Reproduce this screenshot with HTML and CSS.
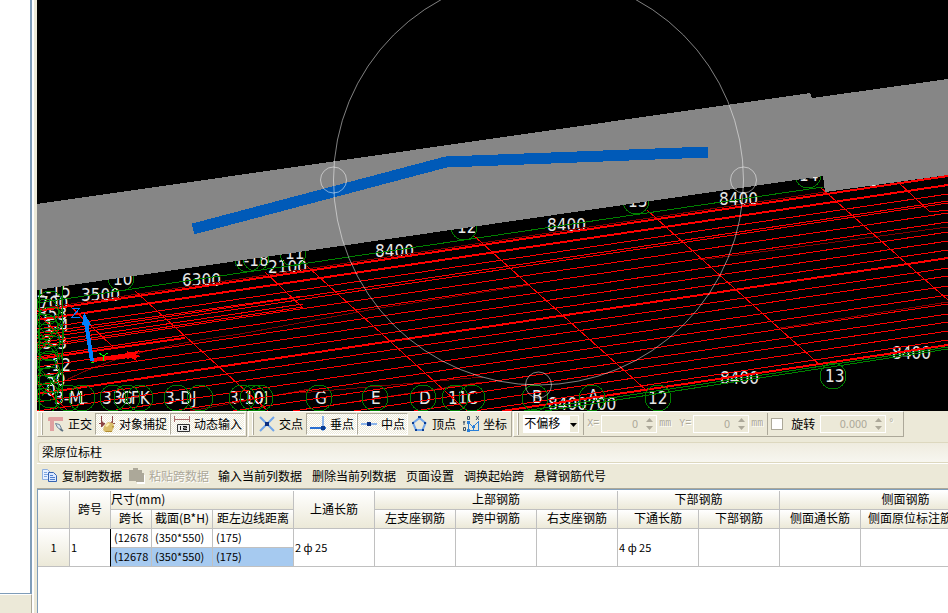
FILE: index.html
```html
<!DOCTYPE html>
<html lang="zh-CN">
<head>
  <meta charset="UTF-8">
  <meta name="viewport" content="width=device-width, initial-scale=1.0">
  <title>梁原位标柱</title>
  <link rel="stylesheet" href="styles.css">
</head>
<body>
  <div class="app">
    <aside class="side">
      <div class="side-list"></div>
      <div class="side-foot"></div>
    </aside>

    <main class="main">
      <svg class="view" viewBox="37 0 911 411" preserveAspectRatio="xMidYMid slice">
        <!-- axis labels -->
        <g class="label">
          <text x="719" y="205">8400</text>
          <text x="547" y="231">8400</text>
          <text x="375" y="257">8400</text>
          <text x="182" y="286">6300</text>
          <text x="81" y="301">3500</text>
          <text x="268" y="273">2100</text>
          <text x="720" y="384">8400</text>
          <text x="892" y="359">8400</text>
          <text x="548" y="410">8400</text>
          <text x="587" y="410">700</text>
          <text x="799" y="181">14</text>
          <text x="628" y="207">13</text>
          <text x="457" y="233">12</text>
          <text x="285" y="259">11</text>
          <text x="234" y="266">1-18</text>
          <text x="113" y="285">10</text>
          <text x="869" y="186">3</text>
          <text x="36" y="297">1-15</text>
          <text x="39" y="309">700</text>
          <text x="38" y="320">353</text>
          <text x="44" y="332">1-4</text>
          <text x="42" y="349">3-3</text>
          <text x="46" y="371">-12</text>
          <text x="46" y="386">50</text>
          <text x="46" y="396">0</text>
          <text x="54" y="404">3-</text>
          <text x="69" y="404">M</text>
          <text x="79" y="404">L</text>
          <text x="102" y="404">3</text>
          <text x="113" y="404">3-</text>
          <text x="121" y="404">G</text>
          <text x="131" y="404">FK</text>
          <text x="165" y="404">3-DJ</text>
          <text x="229" y="404">3-10</text>
          <text x="254" y="404">0I</text>
          <text x="315" y="404">G</text>
          <text x="371" y="404">E</text>
          <text x="419" y="404">D</text>
          <text x="448" y="404">11</text>
          <text x="467" y="404">C</text>
          <text x="532" y="403">B</text>
          <text x="588" y="402">A</text>
          <text x="648" y="404">12</text>
          <text x="825" y="382">13</text>
        </g>

        <!-- grid lines -->
        <path class="dark" d="M63 382Q120 350 240 334L380 308L530 285M700 260L948 227M780 328L948 302M37 309L825 192M300 393L483 377M300 410L483 382M190 411L310 389"/>
        <path class="red" d="M37 329L948 194M37 336L948 201M37 339L948 203M37 348L948 213M37 357L948 222M37 367L948 232M37 376L948 241M37 385L948 250M37 402L948 268M37 411L948 276M109 411L948 286M172 411L948 295M233 411L948 304M293 411L948 314M354 411L948 322M414 411L948 331M474 411L948 340"/>
        <path class="red" d="M37 333L303 296M37 343L303 304M37 346L303 307"/>
        <path class="red thick" d="M37 311L948 176M37 320L948 185M37 394L948 258M502 411L948 345M37 359L185 338"/>
        <path class="red" d="M135 291L268 411M265 272L303 308M67 303L113 347M307 266L467 411M473 235L646 390M647 210L820 365M820 187L948 300M898 182L930 212L948 210M37 381L68 411M37 313L68 343"/>

        <!-- axes and their bubbles -->
        <path class="green" d="M37 303L823 187M524 411L948 347M545 411L948 349"/>
        <g class="green">
          <circle cx="464" cy="227" r="13"/><circle cx="636" cy="201" r="13"/>
          <circle cx="808" cy="175" r="13"/><circle cx="121" cy="278" r="13"/>
          <circle cx="293" cy="253" r="13"/><circle cx="248" cy="259" r="13"/>
          <circle cx="256" cy="258" r="13"/>
          <circle cx="68" cy="398" r="13"/><circle cx="82" cy="398" r="13"/>
          <circle cx="113" cy="398" r="13"/><circle cx="127" cy="398" r="13"/>
          <circle cx="140" cy="398" r="13"/><circle cx="177" cy="398" r="13"/>
          <circle cx="200" cy="398" r="13"/><circle cx="242" cy="398" r="13"/>
          <circle cx="253" cy="398" r="13"/><circle cx="260" cy="398" r="13"/>
          <circle cx="319" cy="398" r="13"/><circle cx="375" cy="398" r="13"/>
          <circle cx="423" cy="398" r="13"/><circle cx="455" cy="398" r="13"/>
          <circle cx="472" cy="398" r="13"/><circle cx="535" cy="398" r="13"/>
          <circle cx="592" cy="398" r="13"/><circle cx="658" cy="398" r="13"/>
          <circle cx="833" cy="376" r="13"/>
          <circle cx="50" cy="304" r="13"/><circle cx="46" cy="312" r="13"/>
          <circle cx="50" cy="320" r="13"/><circle cx="45" cy="327" r="13"/>
          <circle cx="51" cy="334" r="13"/><circle cx="47" cy="341" r="13"/>
          <circle cx="50" cy="348" r="13"/><circle cx="45" cy="356" r="13"/>
          <circle cx="50" cy="364" r="13"/><circle cx="47" cy="372" r="13"/>
          <circle cx="50" cy="380" r="13"/><circle cx="46" cy="388" r="13"/>
          <circle cx="50" cy="395" r="13"/><circle cx="44" cy="401" r="13"/>
          <path d="M39 290V411M62 286V395M38 330L60 360M40 350L62 320M42 396L60 370M38 366L60 392"/>
        </g>

        <!-- slab and selected beam -->
        <path class="slab" d="M37 204L810 93L812 98L948 79V175L825 192L823 176L37 290Z"/>
        <path class="beam" d="M193 229L446 162L708 152"/>

        <!-- orbit ring -->
        <g class="orbit">
          <circle cx="538.5" cy="180" r="205"/>
          <circle cx="333.5" cy="180" r="13"/>
          <circle cx="743.5" cy="180" r="13"/>
          <circle cx="538.5" cy="385" r="13"/>
        </g>

        <!-- ucs icon -->
        <path class="axis-x" d="M92 360L130 356"/>
        <path class="axis-x-head" d="M127 351L132 353L139 350L136 355L141 356L136 358L137 361L131 358L127 359Z"/>
        <path class="axis-z" d="M92 361L86 322"/>
        <path class="axis-z-head" d="M84 312L91 325H82Z"/>
        <path class="axis-z-mark" d="M72 308H80L72 317H80"/>
        <path class="axis-y-mark" d="M99 353L103 356L108 353M103 356V361M91 362H94"/>
      </svg>

      <div class="toolbar">
        <div class="band">
          <button class="tool">
            <svg width="16" height="16"><path fill="#dfa0a0" d="M1 1h14v4H6v10H2V5H0V2z"/><path fill="#dce6ef" stroke="#6f8496" d="M7.500 7.500l4 1 2 4-1 1-3-2z"/><path stroke="#5a6f80" stroke-width="2" d="M12 13l3 2"/></svg>正交</button>
          <button class="tool down">
            <svg width="16" height="16"><path fill="none" stroke="#8b4545" d="M2.500 0v11M13.500 0v10M0 7.500h6M11 7.500h5"/><path fill="#8b4545" d="M3 5l3 3-3 3zM13 5l-3 3 3 3z"/><path fill="#d9bd69" d="M5 10l4-4 5 1 1 3-2 6H6l-2-2z"/><path fill="#fff2b5" d="M6 10l3-3 2 1-3 3z"/><path fill="#b18c32" d="M6 15h7v1H7zM13 10h2l-1 3z"/></svg>对象捕捉</button>
          <button class="tool down">
            <svg width="16" height="16"><path fill="none" stroke="#a96a6a" d="M.5 0v6M15.500 0v6M0 3.500h16"/><path fill="#eee" stroke="#333" d="M3.500 8.500h12v7h-12z"/><path fill="none" stroke="#111" d="M6.500 10v4M9 10.500h3.500v1.500H9.500v1.500H13"/></svg>动态输入</button>
        </div>
        <div class="band">
          <button class="tool">
            <svg width="16" height="16"><path fill="none" stroke="#6fa4ea" stroke-width="2" d="M1 1l14 14M15 1L1 15"/><path fill="#0a2f80" d="M6 6h4v4H6z"/></svg>交点</button>
          <button class="tool down">
            <svg width="16" height="16"><path stroke="#8bb4ea" stroke-width="2" d="M13 0v15"/><path stroke="#2a6fd0" stroke-width="2" d="M0 12h16"/><path fill="#0a3c90" d="M11 10h4v4h-4z"/></svg>垂点</button>
          <button class="tool down">
            <svg width="16" height="16"><path stroke="#8bb4ea" stroke-width="2" d="M0 8h16"/><path fill="#0a2f80" d="M6 6h4v4H6z"/></svg>中点</button>
          <button class="tool">
            <svg width="16" height="16"><path fill="none" stroke="#6fa4ea" stroke-width="2" d="M7.500 2l6 5-3 7H4L1 7z"/><path fill="#0a3c90" d="M6 0h3v2H6zM12 6h2v2h-2zM0 6h2v2H0zM3 13h2v2H3zM10 13h2v2h-2z"/></svg>顶点</button>
          <button class="tool">
            <svg width="16" height="16"><path fill="none" stroke="#2a80d8" d="M5.500 5v10M4 14.500h12M5 6l5 5 5-5M15.500 5v9M10.500 9v5"/><path fill="none" stroke="#3f5060" d="M4.500 .5h2v3h-2zM.5 11.500h2v3h-2zM0 5l1 2 1-2M1 7v2M13 0l3 4M16 0l-3 4"/><path fill="#2a80d8" d="M4 5h3v3H4zM9 10h3v2H9zM4 13h3v3H4z"/></svg>坐标</button>
        </div>
        <div class="band">
          <span class="combo">
            <select aria-label="偏移"><option>不偏移</option></select>
            <svg class="combo-arrow" width="7" height="4"><path d="M0 0h7L3.500 4z"/></svg>
          </span>
          <span class="sep"></span>
          <label class="unit" for="offset-x">X=</label>
          <span class="spin"><input id="offset-x" type="text" value="0" disabled><svg width="7" height="12"><path d="M3.500 0L7 4H0zM0 8h7L3.500 12z"/></svg></span>
          <span class="unit after">mm</span>
          <label class="unit" for="offset-y">Y=</label>
          <span class="spin"><input id="offset-y" type="text" value="0" disabled><svg width="7" height="12"><path d="M3.500 0L7 4H0zM0 8h7L3.500 12z"/></svg></span>
          <span class="unit">mm</span>
          <span class="sep"></span>
          <input class="check" id="rotate" type="checkbox">
          <label class="rotate" for="rotate">旋转</label>
          <span class="spin wide"><input type="text" value="0.000" aria-label="旋转角度" disabled><svg width="7" height="12"><path d="M3.500 0L7 4H0zM0 8h7L3.500 12z"/></svg></span>
          <span class="unit after">°</span>
        </div>
      </div>

      <h1 class="caption">梁原位标柱</h1>

      <div class="actions">
        <button class="action">
          <svg width="16" height="16"><path fill="#e8f1ff" stroke="#8fb0e0" d="M.5 1.500h5l3 3v7h-8z"/><path stroke="#7fa6e0" d="M2 4.500h3M2 6.500h4M2 8.500h3"/><path fill="#dbe8ff" stroke="#3563b0" d="M6.500 4.500h5l3 3v6h-8z"/><path stroke="#4f7fcb" d="M8 7.500h3M8 9.500h5M8 11.500h5"/></svg>复制跨数据</button>
        <button class="action" disabled>
          <svg width="16" height="16"><path fill="#fff" d="M8 7h8v9H8z"/><path fill="#aca899" d="M0 2h4V0h5v2h4v3h2v9H7v-1H0z"/></svg>粘贴跨数据</button>
        <button class="action">输入当前列数据</button>
        <button class="action">删除当前列数据</button>
        <button class="action">页面设置</button>
        <button class="action">调换起始跨</button>
        <button class="action">悬臂钢筋代号</button>
      </div>

      <div class="sheet">
        <table class="grid">
          <colgroup>
            <col class="c-index"><col class="c-no"><col class="c-length"><col class="c-section"><col class="c-bar">
            <col class="c-bar"><col class="c-bar"><col class="c-bar"><col class="c-bar"><col class="c-bar"><col class="c-bar">
            <col class="c-bar"><col class="c-side"><col class="c-rest">
          </colgroup>
          <thead>
            <tr>
              <th rowspan="2"></th>
              <th rowspan="2">跨号</th>
              <th class="left" colspan="3">尺寸(mm)</th>
              <th rowspan="2">上通长筋</th>
              <th colspan="3">上部钢筋</th>
              <th colspan="2">下部钢筋</th>
              <th colspan="3">侧面钢筋</th>
            </tr>
            <tr>
              <th>跨长</th>
              <th>截面(B*H)</th>
              <th>距左边线距离</th>
              <th>左支座钢筋</th>
              <th>跨中钢筋</th>
              <th>右支座钢筋</th>
              <th>下通长筋</th>
              <th>下部钢筋</th>
              <th>侧面通长筋</th>
              <th>侧面原位标注筋</th>
              <th></th>
            </tr>
          </thead>
          <tbody>
            <tr>
              <th rowspan="2">1</th>
              <td class="span-no" rowspan="2">1</td>
              <td class="size">(12678</td>
              <td class="size">(350*550)</td>
              <td class="size">(175)</td>
              <td rowspan="2">2 ф 25</td>
              <td rowspan="2"></td>
              <td rowspan="2"></td>
              <td rowspan="2"></td>
              <td rowspan="2">4 ф 25</td>
              <td rowspan="2"></td>
              <td rowspan="2"></td>
              <td rowspan="2"></td>
              <td rowspan="2"></td>
            </tr>
            <tr class="selected">
              <td class="size">(12678</td>
              <td class="size">(350*550)</td>
              <td class="size">(175)</td>
            </tr>
          </tbody>
        </table>
      </div>
    </main>
  </div>
</body>
</html>
```
FILE: styles.css
```css
* {
  box-sizing: border-box;
}

body {
  margin: 0;
  background: #ece9d8;
  color: #000;
  font: 12px/16px "Noto Sans CJK SC", sans-serif;
}

button, input, select {
  font: inherit;
  color: inherit;
}

.app {
  display: grid;
  grid-template-columns: 37px minmax(0, 1fr);
  height: 100vh;
}

/* left panel */
.side {
  display: flex;
  flex-direction: column;
  margin-right: 3px;
  border-right: 2px solid #fff;
}

.side-list {
  flex: 1;
  background: #fff;
  border-right: 2px solid #7f9db9;
  border-bottom: 1px solid #7f9db9;
}

.side-foot {
  height: 19px;
  border-top: 1px solid #fff;
  border-right: 1px solid #aca899;
}

.main {
  display: flex;
  flex-direction: column;
  min-width: 0;
}

/* 3d view */
.view {
  flex: 1;
  display: block;
  width: 100%;
  min-height: 0;
  background: #000;
  shape-rendering: crispEdges;
}

.label {
  fill: #e6e6e6;
  font: 17px "DejaVu Sans Condensed", "DejaVu Sans", sans-serif;
}

.red, .dark, .green, .orbit, .axis-y-mark, .axis-z-mark {
  fill: none;
  stroke-width: 1px;
}

.red {
  stroke: #f00;
}

.dark {
  stroke: #800000;
}

.thick {
  stroke-width: 2px;
}

.green {
  stroke: #008000;
}

.slab {
  fill: #868686;
}

.beam {
  fill: none;
  stroke: #005ab8;
  stroke-width: 11px;
}

.orbit {
  stroke: #fff;
  stroke-opacity: 0.5;
  shape-rendering: auto;
}

.axis-x {
  stroke: #f00;
  stroke-width: 4px;
}

.axis-x-head {
  fill: #f00;
}

.axis-z {
  stroke: #0080ff;
  stroke-width: 4px;
}

.axis-z-head {
  fill: #0080ff;
}

.axis-z-mark {
  stroke: #0080ff;
}

.axis-y-mark {
  stroke: #0f0;
}

/* snap toolbar */
.toolbar {
  display: flex;
  gap: 1px;
  height: 26px;
  overflow: hidden;
}

.band {
  display: flex;
  align-items: center;
  padding: 0 1px 0 3px;
  border: 1px solid #fff;
  border-right-color: #aca899;
  border-bottom-color: #aca899;
}

.band::before {
  content: "";
  height: 22px;
  margin-right: 1px;
  border-left: 1px solid #fff;
  border-right: 1px solid #aca899;
}

.tool {
  display: flex;
  align-items: center;
  gap: 4px;
  height: 22px;
  padding: 0 2px 0 3px;
  border: 1px solid transparent;
  background: none;
  white-space: nowrap;
}

.tool svg, .action svg {
  flex: none;
}

.down {
  border-color: #aca899 #fff #fff #aca899;
  background: repeating-conic-gradient(#fff 0 25%, #ece9d8 0 50%) 0 0 / 2px 2px;
}

.combo {
  position: relative;
  margin-left: 3px;
}

.combo select {
  display: block;
  width: 56px;
  height: 18px;
  padding: 0 0 2px;
  border: 1px solid #fff;
  border-radius: 0;
  background: linear-gradient(90deg, #fff 46px, #ece9d8 46px);
  line-height: 14px;
  appearance: none;
}

.combo-arrow {
  position: absolute;
  right: 2px;
  top: 8px;
  pointer-events: none;
}

.sep {
  width: 1px;
  height: 22px;
  margin: 0 3px 0 4px;
  background: #aca899;
}

.unit {
  color: #aca899;
  font: 10px/16px "Liberation Mono", monospace;
  text-shadow: 1px 1px #fff;
}

.spin {
  display: flex;
  align-items: center;
  width: 56px;
  height: 18px;
  margin: 0 2px;
  padding-right: 3px;
  border: 1px solid #fff;
}

.spin input {
  flex: 1;
  min-width: 0;
  padding: 0 8px 2px 0;
  border: 0;
  background: none;
  color: #aca899;
  font-size: 11px;
  text-align: right;
}

.spin svg {
  fill: #aca899;
}

.after {
  margin-right: 8px;
}

.check {
  width: 12px;
  height: 12px;
  margin: 0;
  border: 1px solid #aca899;
  background: #fff;
  appearance: none;
}

.rotate {
  margin: 0 3px 0 8px;
}

.wide {
  width: 66px;
}

/* docked panel */
.caption {
  margin: 5px 0 0 1px;
  padding: 0 4px 2px 3px;
  border: 1px solid #ddd8bf;
  border-right: 0;
  border-radius: 3px 0 0 3px;
  background: linear-gradient(#efecdf, #f7f6f0);
  font: inherit;
  line-height: 17px;
}

.actions {
  display: flex;
  align-items: center;
  height: 26px;
  overflow: hidden;
  border-top: 1px solid #fff;
  border-bottom: 1px solid #aca899;
}

.action {
  display: flex;
  align-items: center;
  gap: 4px;
  flex: none;
  padding: 0 5px 1px;
  border: 0;
  background: none;
}

.action:disabled {
  padding-left: 2px;
  padding-right: 4px;
  color: #aca899;
  text-shadow: 1px 1px #fff;
}

.sheet {
  height: 124px;
  overflow: hidden;
  padding-top: 1px;
  border-top: 1px solid #7f9db9;
  border-left: 1px solid #7f9db9;
  background: #fff;
}

.grid {
  width: 994px;
  table-layout: fixed;
  border-collapse: separate;
  border-spacing: 0;
}

.grid th, .grid td {
  height: 19px;
  padding: 0 0 2px;
  border-right: 1px solid #c0c0c0;
  border-bottom: 1px solid #c0c0c0;
  overflow: hidden;
  white-space: nowrap;
  line-height: 16px;
}

.grid th {
  background: linear-gradient(#fff, #ece9d8);
  font-weight: normal;
}

.grid td, .grid tbody th {
  font-size: 11px;
}

.grid td {
  padding-left: 1px;
  text-align: left;
}

.grid .left {
  text-align: left;
}

.grid .size {
  padding-left: 3px;
}

.grid .span-no {
  border-right-color: #000;
}

.selected td {
  background: #a6caf0;
}

.c-index { width: 32px; }
.c-no { width: 41px; }
.c-length { width: 41px; }
.c-section { width: 61px; }
.c-bar { width: 81px; }
.c-side { width: 99px; }
.c-rest { width: 72px; }
```
